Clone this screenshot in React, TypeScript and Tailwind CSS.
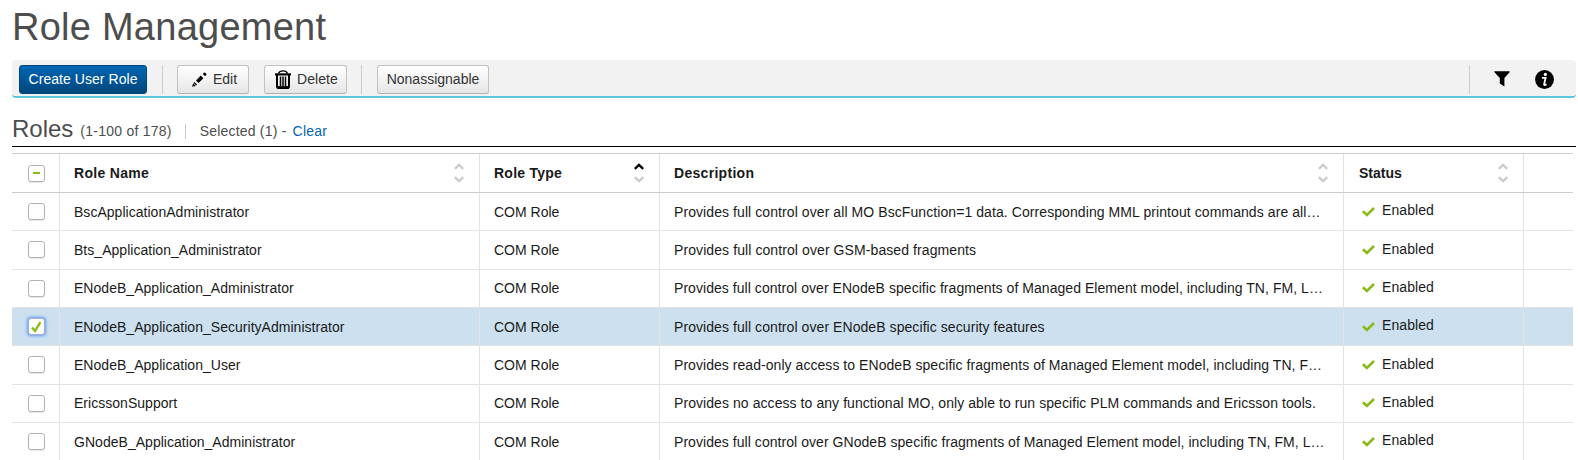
import type { ReactNode } from "react";

type Role = { name: string; description: string; tracking: string; selected?: boolean };

const roles: Role[] = [
  {
    name: "BscApplicationAdministrator",
    description: "Provides full control over all MO BscFunction=1 data. Corresponding MML printout commands are all…",
    tracking: "tracking-[0.08px]",
  },
  {
    name: "Bts_Application_Administrator",
    description: "Provides full control over GSM-based fragments",
    tracking: "tracking-[0.09px]",
  },
  {
    name: "ENodeB_Application_Administrator",
    description: "Provides full control over ENodeB specific fragments of Managed Element model, including TN, FM, L…",
    tracking: "tracking-[0.05px]",
  },
  {
    name: "ENodeB_Application_SecurityAdministrator",
    description: "Provides full control over ENodeB specific security features",
    tracking: "tracking-[0.07px]",
    selected: true,
  },
  {
    name: "ENodeB_Application_User",
    description: "Provides read-only access to ENodeB specific fragments of Managed Element model, including TN, F…",
    tracking: "tracking-[0.05px]",
  },
  {
    name: "EricssonSupport",
    description: "Provides no access to any functional MO, only able to run specific PLM commands and Ericsson tools.",
    tracking: "tracking-[0.07px]",
  },
  {
    name: "GNodeB_Application_Administrator",
    description: "Provides full control over GNodeB specific fragments of Managed Element model, including TN, FM, L…",
    tracking: "tracking-[0.05px]",
  },
];

const columns = "grid w-[1561px] grid-cols-[48px_420px_180px_684px_180px_49px]";

function PencilIcon() {
  return (
    <svg width="15" height="15" viewBox="0 0 15 15" className="shrink-0">
      <path d="M0.2 14.8 1.1 11.3 3.7 13.9Z" />
      <path d="M1.6 10.9 4.1 13.4 5 12.5 2.5 10Z" />
      <path d="M4 8.4 8.8 3.6 11.4 6.2 6.6 11Z" />
      <path d="M10.8 2 12 .8Q12.6.2 13.2.8L14.2 1.8Q14.8 2.4 14.2 3L13 4.2Z" />
    </svg>
  );
}

function TrashIcon() {
  return (
    <svg width="16" height="19" viewBox="0 0 16 19" className="shrink-0" fill="none" stroke="#000">
      <path d="M3.4 3.4C4.3 1.2 6 .8 8 .8s3.7.4 4.6 2.6" strokeWidth="1.3" />
      <path d="M0 4.4h16" strokeWidth="2.2" />
      <path d="M2 5v11.2Q2 18 3.8 18h8.4Q14 18 14 16.2V5" strokeWidth="2" />
      <path d="M5.5 6.5v9.5M8 6.5v9.5M10.5 6.5v9.5" strokeWidth="1.5" />
      <path d="M2 17.2h12" strokeWidth="2.2" />
    </svg>
  );
}

function FilterIcon() {
  return (
    <svg width="16" height="16" viewBox="0 0 16 16">
      <path d="M1 .2h14q1 0 .8.9L10.4 7V15.4L5.8 12.6V7L.2 1.1Q0 .2 1 .2Z" />
    </svg>
  );
}

function InfoIcon() {
  return (
    <svg width="19" height="19" viewBox="0 0 20 20">
      <circle cx="10" cy="10" r="9.9" />
      <circle cx="10.9" cy="4.7" r="1.7" fill="#fff" />
      <path d="M7.3 8.2h3.9L9.6 14.8q-.1 1.2 1 .9l1.6-.6" fill="none" stroke="#fff" strokeWidth="1.9" />
    </svg>
  );
}

function SortArrows({ ascending = false }: { ascending?: boolean }) {
  return (
    <svg width="10" height="20" viewBox="0 0 10 20" fill="none" strokeWidth="2.4">
      <path d="M.8 5.8 5 1.9l4.2 3.9" stroke={ascending ? "#000" : "#ccc"} />
      <path d="M.8 14.2 5 18.1l4.2-3.9" stroke="#ccc" />
    </svg>
  );
}

function HeaderCell({ label, tracking, ascending }: { label: string; tracking: string; ascending?: boolean }) {
  return (
    <div className="flex items-center justify-between border-r border-[#e3e3e3] pr-[15px] pl-[14px] font-bold">
      <span className={tracking}>{label}</span>
      <SortArrows ascending={ascending} />
    </div>
  );
}

function Checkbox({ children, focused = false }: { children?: ReactNode; focused?: boolean }) {
  return (
    <span
      className={
        focused
          ? "flex size-[17px] items-center justify-center rounded-[3px] border border-[#a9aec0] bg-white shadow-[0_0_3px_1px_#5c9bff]"
          : "flex size-[17px] items-center justify-center rounded-[3px] border border-[#b3b3b3] bg-white shadow-[0_1px_1px_#e6e6e6]"
      }
    >
      {children}
    </span>
  );
}

function Button({ children, className }: { children: ReactNode; className: string }) {
  return (
    <button
      className={`flex h-[29px] items-center rounded-[3px] border border-[#c2c2c2] border-b-[#b0b0b0] bg-linear-to-b from-white to-[#e6e6e6] ${className}`}
    >
      {children}
    </button>
  );
}

function Divider() {
  return <span className="h-[29px] w-px bg-[#ccc]" />;
}

export default function App() {
  return (
    <main className="h-[460px] overflow-hidden bg-white pl-3 font-['Liberation_Sans',Arial,sans-serif] text-[14px] leading-[18px] text-[#1a1a1a]">
      <h1 className="flex h-[60px] items-start pt-[5px] text-[38px] leading-[44px] tracking-[0.25px] whitespace-nowrap text-[#4d4d4d]">
        Role Management
      </h1>

      <div className="flex h-[38px] w-[1564px] items-start rounded-[4px] border-b-2 border-[#5bc5e0] bg-[#f2f2f2] pt-[5px] pl-[7px] text-[#333]">
        <button className="h-[29px] w-[128px] rounded-[3px] border border-[#00477d] bg-linear-to-b from-[#0066b3] to-[#00477d] pb-[2px] text-center tracking-[0.05px] text-white">
          Create User Role
        </button>
        <div className="ml-[15px] flex">
          <Divider />
        </div>
        <Button className="ml-[14px] w-[72px] gap-[6px] pl-[14px]">
          <PencilIcon />
          <span className="pb-[2px]">Edit</span>
        </Button>
        <Button className="ml-[15px] w-[83px] gap-[6px] pl-[10px]">
          <TrashIcon />
          <span className="pb-[2px] tracking-[0.05px]">Delete</span>
        </Button>
        <div className="ml-[14px] flex">
          <Divider />
        </div>
        <Button className="ml-[15px] w-[112px] justify-center pb-[2px]">Nonassignable</Button>
        <div className="ml-auto flex w-[107px]">
          <Divider />
          <div className="mt-[6px] ml-[24px]">
            <FilterIcon />
          </div>
          <div className="mt-[5px] ml-[25px]">
            <InfoIcon />
          </div>
        </div>
      </div>

      <div className="flex h-[49px] w-[1564px] items-baseline border-b border-black pt-[17px] text-[#4d4d4d]">
        <h2 className="text-[24px] leading-[28px]">Roles</h2>
        <span className="ml-[7px] -translate-y-px tracking-[0.24px]">(1-100 of 178)</span>
        <span className="ml-[13px] h-[15px] w-px translate-y-px self-center bg-[#ccc]" />
        <span className="ml-[14px] -translate-y-px tracking-[0.2px]">Selected (1) -</span>
        <a className="ml-[6px] -translate-y-px tracking-[0.25px] text-[#0066b3]">Clear</a>
      </div>

      <div className="mt-[6px]">
        <div className={`${columns} h-[40px] border-y border-[#ccc]`}>
          <div className="flex items-center border-r border-[#e3e3e3] pl-[16px]">
            <Checkbox>
              <span className="h-[2px] w-[7px] bg-[#89ba17]" />
            </Checkbox>
          </div>
          <HeaderCell label="Role Name" tracking="tracking-[0.3px]" />
          <HeaderCell label="Role Type" tracking="tracking-[0.25px]" ascending />
          <HeaderCell label="Description" tracking="tracking-[0.3px]" />
          <HeaderCell label="Status" tracking="pl-px tracking-[0.02px]" />
          <div />
        </div>

        {roles.map((role) => (
          <div
            key={role.name}
            className={`${columns} h-[38.3333px] border-b border-[#e3e3e3] whitespace-nowrap ${role.selected ? "bg-[#cce0ef]" : ""}`}
          >
            <div className="flex items-center border-r border-[#e3e3e3] pl-[16px]">
              <Checkbox focused={role.selected}>
                {role.selected && (
                  <svg width="11" height="12" viewBox="0 0 11 12" fill="none">
                    <path d="M1 6.6 4 10 9.4 1.2" stroke="#89ba17" strokeWidth="2.3" />
                  </svg>
                )}
              </Checkbox>
            </div>
            <div className="flex items-center border-r border-[#e3e3e3] pl-[14px] tracking-[0.03px]">{role.name}</div>
            <div className="flex items-center border-r border-[#e3e3e3] pl-[14px]">COM Role</div>
            <div className={`flex items-center border-r border-[#e3e3e3] pl-[14px] ${role.tracking}`}>
              {role.description}
            </div>
            <div className="flex items-center border-r border-[#e3e3e3] pl-[18px]">
              <svg width="13" height="10" viewBox="0 0 13 10" fill="none">
                <path d="M.9 4.2 4.9 8 12 1" stroke="#89ba17" strokeWidth="2.6" />
              </svg>
              <span className="-mt-[2.4px] ml-[7px] tracking-[0.08px]">Enabled</span>
            </div>
            <div />
          </div>
        ))}
      </div>
    </main>
  );
}
